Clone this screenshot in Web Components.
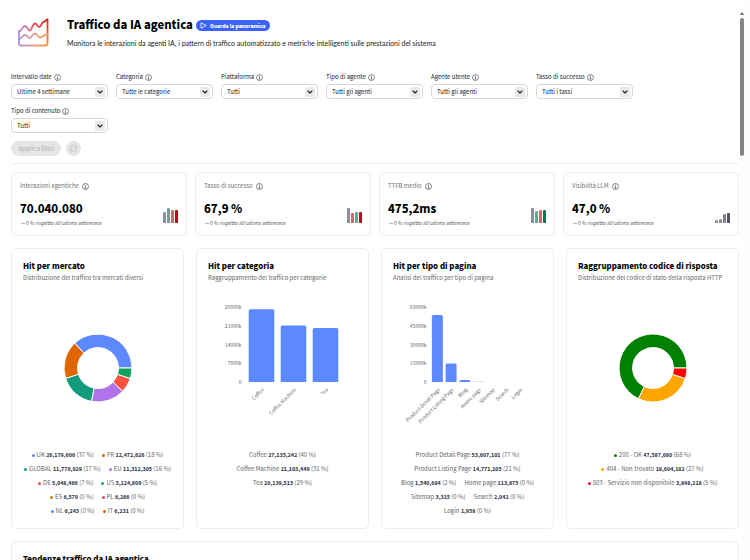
<!DOCTYPE html>
<html lang="it">
<head>
<meta charset="utf-8">
<meta name="viewport" content="width=device-width, initial-scale=1">
<title>Traffico da IA agentica</title>
<style>
  body {
    --strong-font: "Source Sans 3", "Noto Sans CJK JP", sans-serif;
    margin: 0;
    background: #fff;
    color: #222;
    font-family: "Noto Sans CJK JP", "Noto Sans", sans-serif;
    font-size: 6px;
    line-height: 8px;
  }
</style>
</head>
<body>
<dashboard-page>
  <page-header slot="header" heading="Traffico da IA agentica" description="Monitora le interazioni da agenti IA, i pattern di traffico automatizzato e metriche intelligenti sulle prestazioni del sistema"></page-header>

  <filter-bar slot="filters">
    <filter-select label="Intervallo date" value="Ultime 4 settimane"></filter-select>
    <filter-select label="Categoria" value="Tutte le categorie"></filter-select>
    <filter-select label="Piattaforma" value="Tutti"></filter-select>
    <filter-select label="Tipo di agente" value="Tutti gli agenti"></filter-select>
    <filter-select label="Agente utente" value="Tutti gli agenti"></filter-select>
    <filter-select label="Tasso di successo" value="Tutti i tassi"></filter-select>
    <filter-select label="Tipo di contenuto" value="Tutti"></filter-select>
  </filter-bar>

  <kpi-card slot="kpis" label="Interazioni agentiche" value="70.040.080" bars="11:#8f8f9b 15:#62a896 13:#d0696c 13:#b30f14"></kpi-card>
  <kpi-card slot="kpis" label="Tasso di successo" value="67,9 %" bars="15:#8f8f9b 10:#d0696c 11:#62a896 11:#b30f14"></kpi-card>
  <kpi-card slot="kpis" label="TTFB medio" value="475,2ms" bars="15:#8f8f9b 12:#62a896 13:#d0696c 13:#0b7a4b"></kpi-card>
  <kpi-card slot="kpis" label="Visibilità LLM" value="47,0 %" bars="3:#8f8f9b 4:#8f8f9b 9:#80808f 10:#50566b"></kpi-card>

  <chart-card slot="charts" heading="Hit per mercato" description="Distribuzione del traffico tra mercati diversi">
    <donut-chart slices="37:#5c89ff 18:#e06400 17:#129a7c 16:#b073ea 7:#ff513d 5:#10a35e"></donut-chart>
    <legend-item slot="legend" color="#5c89ff" label="UK" value="26,179,606" share="37"></legend-item>
    <legend-item slot="legend" color="#e06400" label="FR" value="12,472,626" share="18"></legend-item>
    <legend-item slot="legend" color="#129a7c" label="GLOBAL" value="11,776,929" share="17"></legend-item>
    <legend-item slot="legend" color="#b073ea" label="EU" value="11,312,305" share="16"></legend-item>
    <legend-item slot="legend" color="#ff513d" label="DE" value="5,048,466" share="7"></legend-item>
    <legend-item slot="legend" color="#10a35e" label="US" value="3,224,809" share="5"></legend-item>
    <legend-break slot="legend"></legend-break>
    <legend-item slot="legend" color="#c97a00" label="ES" value="6,579" share="0"></legend-item>
    <legend-item slot="legend" color="#f0436e" label="PL" value="6,286" share="0"></legend-item>
    <legend-break slot="legend"></legend-break>
    <legend-item slot="legend" color="#5c89ff" label="NL" value="6,243" share="0"></legend-item>
    <legend-item slot="legend" color="#e06400" label="IT" value="6,231" share="0"></legend-item>
  </chart-card>

  <chart-card slot="charts" heading="Hit per categoria" description="Raggruppamento del traffico per categorie">
    <bar-chart max="28000" data="Coffee:27135|Coffee Machine:21103|Tea:20139"></bar-chart>
    <legend-item slot="legend" label="Coffee" value="27,135,242" share="40"></legend-item>
    <legend-item slot="legend" label="Coffee Machine" value="21,103,449" share="31"></legend-item>
    <legend-item slot="legend" label="Tea" value="20,139,515" share="29"></legend-item>
  </chart-card>

  <chart-card slot="charts" heading="Hit per tipo di pagina" description="Analisi del traffico per tipo di pagina">
    <bar-chart max="60000" data="Product Detail Page:53607|Product Listing Page:14771|Blog:1540|Home page:113|Sitemap:3|Search:2|Login:1"></bar-chart>
    <legend-item slot="legend" label="Product Detail Page" value="53,607,101" share="77"></legend-item>
    <legend-item slot="legend" label="Product Listing Page" value="14,771,105" share="21"></legend-item>
    <legend-item slot="legend" label="Blog" value="1,540,684" share="2"></legend-item>
    <legend-item slot="legend" label="Home page" value="113,875" share="0"></legend-item>
    <legend-item slot="legend" label="Sitemap" value="3,315" share="0"></legend-item>
    <legend-item slot="legend" label="Search" value="2,042" share="0"></legend-item>
    <legend-item slot="legend" label="Login" value="1,958" share="0"></legend-item>
  </chart-card>

  <chart-card slot="charts" heading="Raggruppamento codice di risposta" description="Distribuzione del codice di stato della risposta HTTP">
    <donut-chart slices="68:#008000 27:#ffa500 5:#ff0000"></donut-chart>
    <legend-item slot="legend" color="#008000" label="200 - OK" value="47,587,680" share="68"></legend-item>
    <legend-item slot="legend" color="#ffa500" label="404 - Non trovato" value="18,604,182" share="27"></legend-item>
    <legend-item slot="legend" color="#e8112d" label="503 - Servizio non disponibile" value="3,848,218" share="5"></legend-item>
  </chart-card>

  <chart-card slot="trends" heading="Tendenze traffico da IA agentica" description=""></chart-card>
</dashboard-page>

<script>
class DashboardPage extends HTMLElement {
  constructor() {
    super();
    this.attachShadow({ mode: "open" });
  }

  connectedCallback() {
    this.shadowRoot.innerHTML = `
      <style>
        :host {
          display: block;
          position: relative;
          height: 100vh;
          overflow: hidden;
          background: linear-gradient(to left, #fdfdfd 9px, #fff 9px);
        }
        main {
          padding: 17px 11px 12px;
        }
        .filters {
          padding-bottom: 7px;
          border-bottom: 1px solid #efefef;
        }
        .kpis, .charts {
          display: grid;
          grid-template-columns: repeat(4, minmax(0, 1fr));
        }
        .kpis {
          gap: 8px;
          margin: 8px 0 12px;
        }
        .charts {
          gap: 12px;
          margin-bottom: 12px;
        }
        .scrollbar {
          position: absolute;
          top: 11px;
          right: 6px;
          width: 4px;
        }
        .scrollbar svg {
          display: block;
          width: 4px;
          height: 4px;
        }
        .thumb {
          height: 138px;
          margin-top: 3px;
          border-radius: 2px;
          background: #858585;
        }
      </style>
      <main>
        <slot name="header"></slot>
        <div class="filters"><slot name="filters"></slot></div>
        <section class="kpis"><slot name="kpis"></slot></section>
        <section class="charts"><slot name="charts"></slot></section>
        <slot name="trends"></slot>
      </main>
      <div class="scrollbar" aria-hidden="true">
        <svg viewBox="0 0 4 4"><path d="M0 4 2 1l2 3z" fill="#666"/></svg>
        <div class="thumb"></div>
      </div>
    `;
  }
}

class PageHeader extends HTMLElement {
  constructor() {
    super();
    this.attachShadow({ mode: "open" });
  }

  connectedCallback() {
    this.shadowRoot.innerHTML = `
      <style>
        :host {
          display: flex;
          gap: 17px;
          padding-left: 6px;
          margin-bottom: 24px;
        }
        .logo {
          width: 33px;
          height: 32px;
        }
        .title {
          display: flex;
          align-items: center;
          gap: 3px;
          height: 16px;
        }
        h1 {
          margin: 0;
          font: 700 13px/16px var(--strong-font);
          color: #000;
        }
        button {
          display: flex;
          align-items: center;
          gap: 3px;
          height: 11px;
          padding: 0 4px;
          border: 0;
          border-radius: 6px;
          background: #3b63fb;
          color: #fff;
          font: 900 5px/11px "Noto Sans CJK JP", "Noto Sans", sans-serif;
        }
        button svg {
          width: 7px;
          height: 7px;
        }
        p {
          margin: 5px 0 0;
          font: 7px/10px Lato, "Noto Sans", sans-serif;
        }
      </style>
      <svg class="logo" viewBox="0 0 33 32" fill="none" stroke-width="1.800" stroke-linejoin="round" stroke-linecap="round" aria-hidden="true">
        <defs>
          <linearGradient id="top" gradientUnits="userSpaceOnUse" x1="2" y1="0" x2="31" y2="0">
            <stop offset="0" stop-color="#b58bd6"/>
            <stop offset=".4" stop-color="#df6a78"/>
            <stop offset="1" stop-color="#d8241c"/>
          </linearGradient>
          <linearGradient id="base" gradientUnits="userSpaceOnUse" x1="2" y1="0" x2="31" y2="0">
            <stop offset="0" stop-color="#ab93ea"/>
            <stop offset=".5" stop-color="#e9a08a"/>
            <stop offset="1" stop-color="#f5a04c"/>
          </linearGradient>
          <linearGradient id="side" gradientUnits="userSpaceOnUse" x1="0" y1="2" x2="0" y2="29">
            <stop offset="0" stop-color="#d8241c"/>
            <stop offset="1" stop-color="#f5a04c"/>
          </linearGradient>
        </defs>
        <path stroke="url(#base)" d="M2 14v12.500a2 2 0 0 0 2 2h24.500"/>
        <path stroke="url(#side)" d="M30.500 3v23.500a2 2 0 0 1-2 2"/>
        <path stroke="url(#top)" d="M2 14.500c2.500 0 3.500-5.500 6-5.500s2.500 4.500 4.700 4.500S15.500 6.500 18 6.500s2 3.500 4.200 3.500 2-4.500 4.300-5 2-2.500 4-2.500"/>
        <path stroke="url(#base)" d="M2 22c2.500 0 3.500-4 6-4s2.500 3 4.700 3 2.800-4.500 5.300-4.500 2.500 4 5 4 3.500-3 7.500-3"/>
      </svg>
      <div>
        <div class="title">
          <h1>${this.getAttribute("heading")}</h1>
          <button type="button">
            <svg viewBox="0 0 7 7" fill="none" stroke="#fff" stroke-width=".8" stroke-linejoin="round" aria-hidden="true"><path d="M1 .8 6.300 3.500 1 6.200z"/></svg>
            Guarda la panoramica
          </button>
        </div>
        <p>${this.getAttribute("description")}</p>
      </div>
    `;
  }
}

class InfoIcon extends HTMLElement {
  constructor() {
    super();
    this.attachShadow({ mode: "open" });
  }

  connectedCallback() {
    this.shadowRoot.innerHTML = `
      <style>
        :host { display: block; width: 7px; height: 7px; }
        svg { display: block; }
      </style>
      <svg width="7" height="7" viewBox="0 0 14 14" fill="none" stroke="#444" stroke-width="1.300" aria-hidden="true">
        <circle cx="7" cy="7" r="6"/>
        <path d="M5.500 6.500H7V10M5.200 10.200h3.600"/>
        <circle cx="7" cy="4" r=".6" fill="#444" stroke-width=".6"/>
      </svg>
    `;
  }
}

class FilterSelect extends HTMLElement {
  constructor() {
    super();
    this.attachShadow({ mode: "open" });
  }

  connectedCallback() {
    this.shadowRoot.innerHTML = `
      <style>
        :host { display: block; }
        .label {
          display: flex;
          align-items: center;
          gap: 2px;
          height: 8px;
          margin-bottom: 3px;
        }
        .field {
          display: grid;
          align-items: center;
        }
        select, svg { grid-area: 1 / 1; }
        select {
          appearance: none;
          width: 100%;
          height: 15px;
          padding: 0 16px 0 5px;
          border: 1px solid #d8d8d8;
          border-radius: 4px;
          background: #fff;
          color: #222;
          font: inherit;
        }
        svg {
          justify-self: end;
          margin-right: 3px;
          pointer-events: none;
        }
      </style>
      <div class="label"><label for="s">${this.getAttribute("label")}</label><info-icon></info-icon></div>
      <div class="field">
        <select id="s"><option>${this.getAttribute("value")}</option></select>
        <svg width="10" height="10" viewBox="0 0 10 10" fill="none" aria-hidden="true">
          <rect width="10" height="10" rx="2" fill="#e9e9e9"/>
          <path d="m3 4 2 2 2-2" stroke="#222" stroke-width="1.100" stroke-linecap="round" stroke-linejoin="round"/>
        </svg>
      </div>
    `;
  }
}

class FilterBar extends HTMLElement {
  constructor() {
    super();
    this.attachShadow({ mode: "open" });
  }

  connectedCallback() {
    this.shadowRoot.innerHTML = `
      <style>
        :host { display: block; }
        .fields {
          display: grid;
          grid-template-columns: repeat(auto-fill, 97px);
          gap: 8px;
          padding-right: 12px;
        }
        .actions {
          display: flex;
          gap: 5px;
          margin-top: 8px;
        }
        button {
          height: 15px;
          padding: 0 7px;
          border: 0;
          border-radius: 8px;
          background: #e6e6e6;
          color: #c0c0c0;
          font: 700 6px/15px "Noto Sans CJK JP", "Noto Sans", sans-serif;
        }
        .reset {
          display: grid;
          place-items: center;
          width: 15px;
          padding: 0;
        }
      </style>
      <div class="fields"><slot></slot></div>
      <div class="actions">
        <button type="button" disabled>Applica filtri</button>
        <button type="button" class="reset" disabled aria-label="Reimposta filtri">
          <svg width="9" height="9" viewBox="0 0 18 18" fill="none" stroke="#c2c2c2" stroke-width="1.600" stroke-linecap="round" stroke-linejoin="round" aria-hidden="true">
            <path d="M2.500 8A6.600 6.600 0 0 1 15 6M15.500 10A6.600 6.600 0 0 1 3 12M15.500 2.500V6.500h-4M2.500 15.500v-4h4"/>
          </svg>
        </button>
      </div>
    `;
  }
}

class KpiCard extends HTMLElement {
  constructor() {
    super();
    this.attachShadow({ mode: "open" });
  }

  connectedCallback() {
    const bars = this.getAttribute("bars").split(" ").map((bar) => {
      const [height, color] = bar.split(":");
      return `<i style="height:${height}px;background:${color}"></i>`;
    }).join("");

    this.shadowRoot.innerHTML = `
      <style>
        :host {
          display: block;
          padding: 8px;
          border: 1px solid #eee;
          border-radius: 5px;
        }
        .label {
          display: flex;
          align-items: center;
          gap: 3px;
          height: 10px;
          color: #717171;
        }
        .row {
          display: flex;
          align-items: flex-end;
          justify-content: space-between;
          margin-top: 10px;
        }
        strong {
          display: block;
          font: 700 13px/16px var(--strong-font);
          color: #000;
        }
        p {
          margin: 2px 0 0;
          font-size: 5px;
          line-height: 8px;
          color: #555;
        }
        .bars {
          display: flex;
          align-items: flex-end;
          gap: 1px;
          margin-bottom: 4px;
        }
        i {
          width: 3px;
          border-radius: 1px 1px 0 0;
        }
      </style>
      <div class="label"><span>${this.getAttribute("label")}</span><info-icon></info-icon></div>
      <div class="row">
        <div>
          <strong>${this.getAttribute("value")}</strong>
          <p>→ 0 % rispetto all'ultima settimana</p>
        </div>
        <div class="bars">${bars}</div>
      </div>
    `;
  }
}

class ChartCard extends HTMLElement {
  constructor() {
    super();
    this.attachShadow({ mode: "open" });
  }

  connectedCallback() {
    this.shadowRoot.innerHTML = `
      <style>
        :host {
          display: block;
          padding: 12px 11px 10px;
          border: 1px solid #eee;
          border-radius: 5px;
        }
        h2 {
          margin: 0;
          font: 700 9px/12px var(--strong-font);
          color: #000;
          white-space: nowrap;
        }
        p {
          margin: 0;
          line-height: 10px;
          color: #666;
          white-space: nowrap;
        }
        .chart {
          height: 165px;
        }
        .legend {
          display: flex;
          flex-wrap: wrap;
          justify-content: center;
          gap: 0 8px;
          margin: 0 -3px;
        }
      </style>
      <h2>${this.getAttribute("heading")}</h2>
      <p>${this.getAttribute("description")}</p>
      <div class="chart"><slot></slot></div>
      <div class="legend"><slot name="legend"></slot></div>
    `;
  }
}

class LegendItem extends HTMLElement {
  constructor() {
    super();
    this.attachShadow({ mode: "open" });
  }

  connectedCallback() {
    const color = this.getAttribute("color");
    const dot = color ? `<i style="background:${color}"></i>` : "";

    this.shadowRoot.innerHTML = `
      <style>
        :host {
          display: flex;
          align-items: center;
          gap: 2px;
          height: 14px;
          color: #666;
          white-space: nowrap;
        }
        i {
          width: 3px;
          height: 3px;
          border-radius: 50%;
        }
        b {
          font-family: var(--strong-font);
          color: #333a4d;
        }
      </style>
      ${dot}<span>${this.getAttribute("label")} <b>${this.getAttribute("value")}</b> (${this.getAttribute("share")} %)</span>
    `;
  }
}

// Starts a new line inside a legend.
class LegendBreak extends HTMLElement {
  constructor() {
    super();
    this.attachShadow({ mode: "open" });
  }

  connectedCallback() {
    this.shadowRoot.innerHTML = `<style>:host { flex: 0 0 100%; height: 0; }</style>`;
  }
}

class DonutChart extends HTMLElement {
  constructor() {
    super();
    this.attachShadow({ mode: "open" });
  }

  // Slices run counter-clockwise from three o'clock.
  connectedCallback() {
    const outer = 34;
    const inner = 20.5;
    const point = (r, share) => {
      const a = share / 100 * 2 * Math.PI;
      return `${(r * Math.cos(a)).toFixed(2)} ${(-r * Math.sin(a)).toFixed(2)}`;
    };
    let start = 0;
    const paths = this.getAttribute("slices").split(" ").map((slice) => {
      const [share, color] = slice.split(":");
      const end = start + Number(share);
      const large = share > 50 ? 1 : 0;
      const d = `M${point(outer, start)}A${outer} ${outer} 0 ${large} 0 ${point(outer, end)}L${point(inner, end)}A${inner} ${inner} 0 ${large} 1 ${point(inner, start)}z`;
      start = end;
      return `<path d="${d}" fill="${color}"/>`;
    }).join("");

    this.shadowRoot.innerHTML = `
      <style>
        :host {
          display: grid;
          place-items: center;
          padding-top: 50px;
        }
      </style>
      <svg width="70" height="70" viewBox="-35 -35 70 70" stroke="#fff" stroke-width="1" role="img">${paths}</svg>
    `;
  }
}

class BarChart extends HTMLElement {
  constructor() {
    super();
    this.attachShadow({ mode: "open" });
  }

  connectedCallback() {
    const max = Number(this.getAttribute("max"));
    const data = this.getAttribute("data").split("|").map((d) => d.split(":"));
    const left = 37;
    const base = 99;
    const plot = 75;
    const band = 96 / data.length;

    const ticks = [0, 1, 2, 3, 4].map((i) => {
      const text = i ? `${max / 4 * i}k` : "0";
      return `<text x="33" y="${base + 2 - plot / 4 * i}" text-anchor="end">${text}</text>`;
    }).join("");

    const bars = data.map(([name, value], i) => {
      const x = left + band * i;
      const h = value / max * plot;
      const r = Math.min(1.5, h);
      const w = band * 0.8;
      const cx = x + band / 2;
      return `
        <path fill="#5c89ff" d="M${x + band * 0.1} ${base}v${r - h}q0 ${-r} ${r} ${-r}h${w - 2 * r}q${r} 0 ${r} ${r}v${h - r}z"/>
        <text x="${cx + 3}" y="${base + 8}" text-anchor="end" transform="rotate(-45 ${cx + 3} ${base + 8})">${name}</text>`;
    }).join("");

    this.shadowRoot.innerHTML = `
      <style>
        :host { display: block; }
        svg {
          display: block;
          width: 100%;
          height: 150px;
        }
        text {
          font-size: 5px;
          fill: #666;
        }
      </style>
      <svg viewBox="0 0 148 150" role="img">${ticks}${bars}</svg>
    `;
  }
}

customElements.define("info-icon", InfoIcon);
customElements.define("dashboard-page", DashboardPage);
customElements.define("page-header", PageHeader);
customElements.define("filter-select", FilterSelect);
customElements.define("filter-bar", FilterBar);
customElements.define("kpi-card", KpiCard);
customElements.define("chart-card", ChartCard);
customElements.define("legend-item", LegendItem);
customElements.define("legend-break", LegendBreak);
customElements.define("donut-chart", DonutChart);
customElements.define("bar-chart", BarChart);
</script>
</body>
</html>
